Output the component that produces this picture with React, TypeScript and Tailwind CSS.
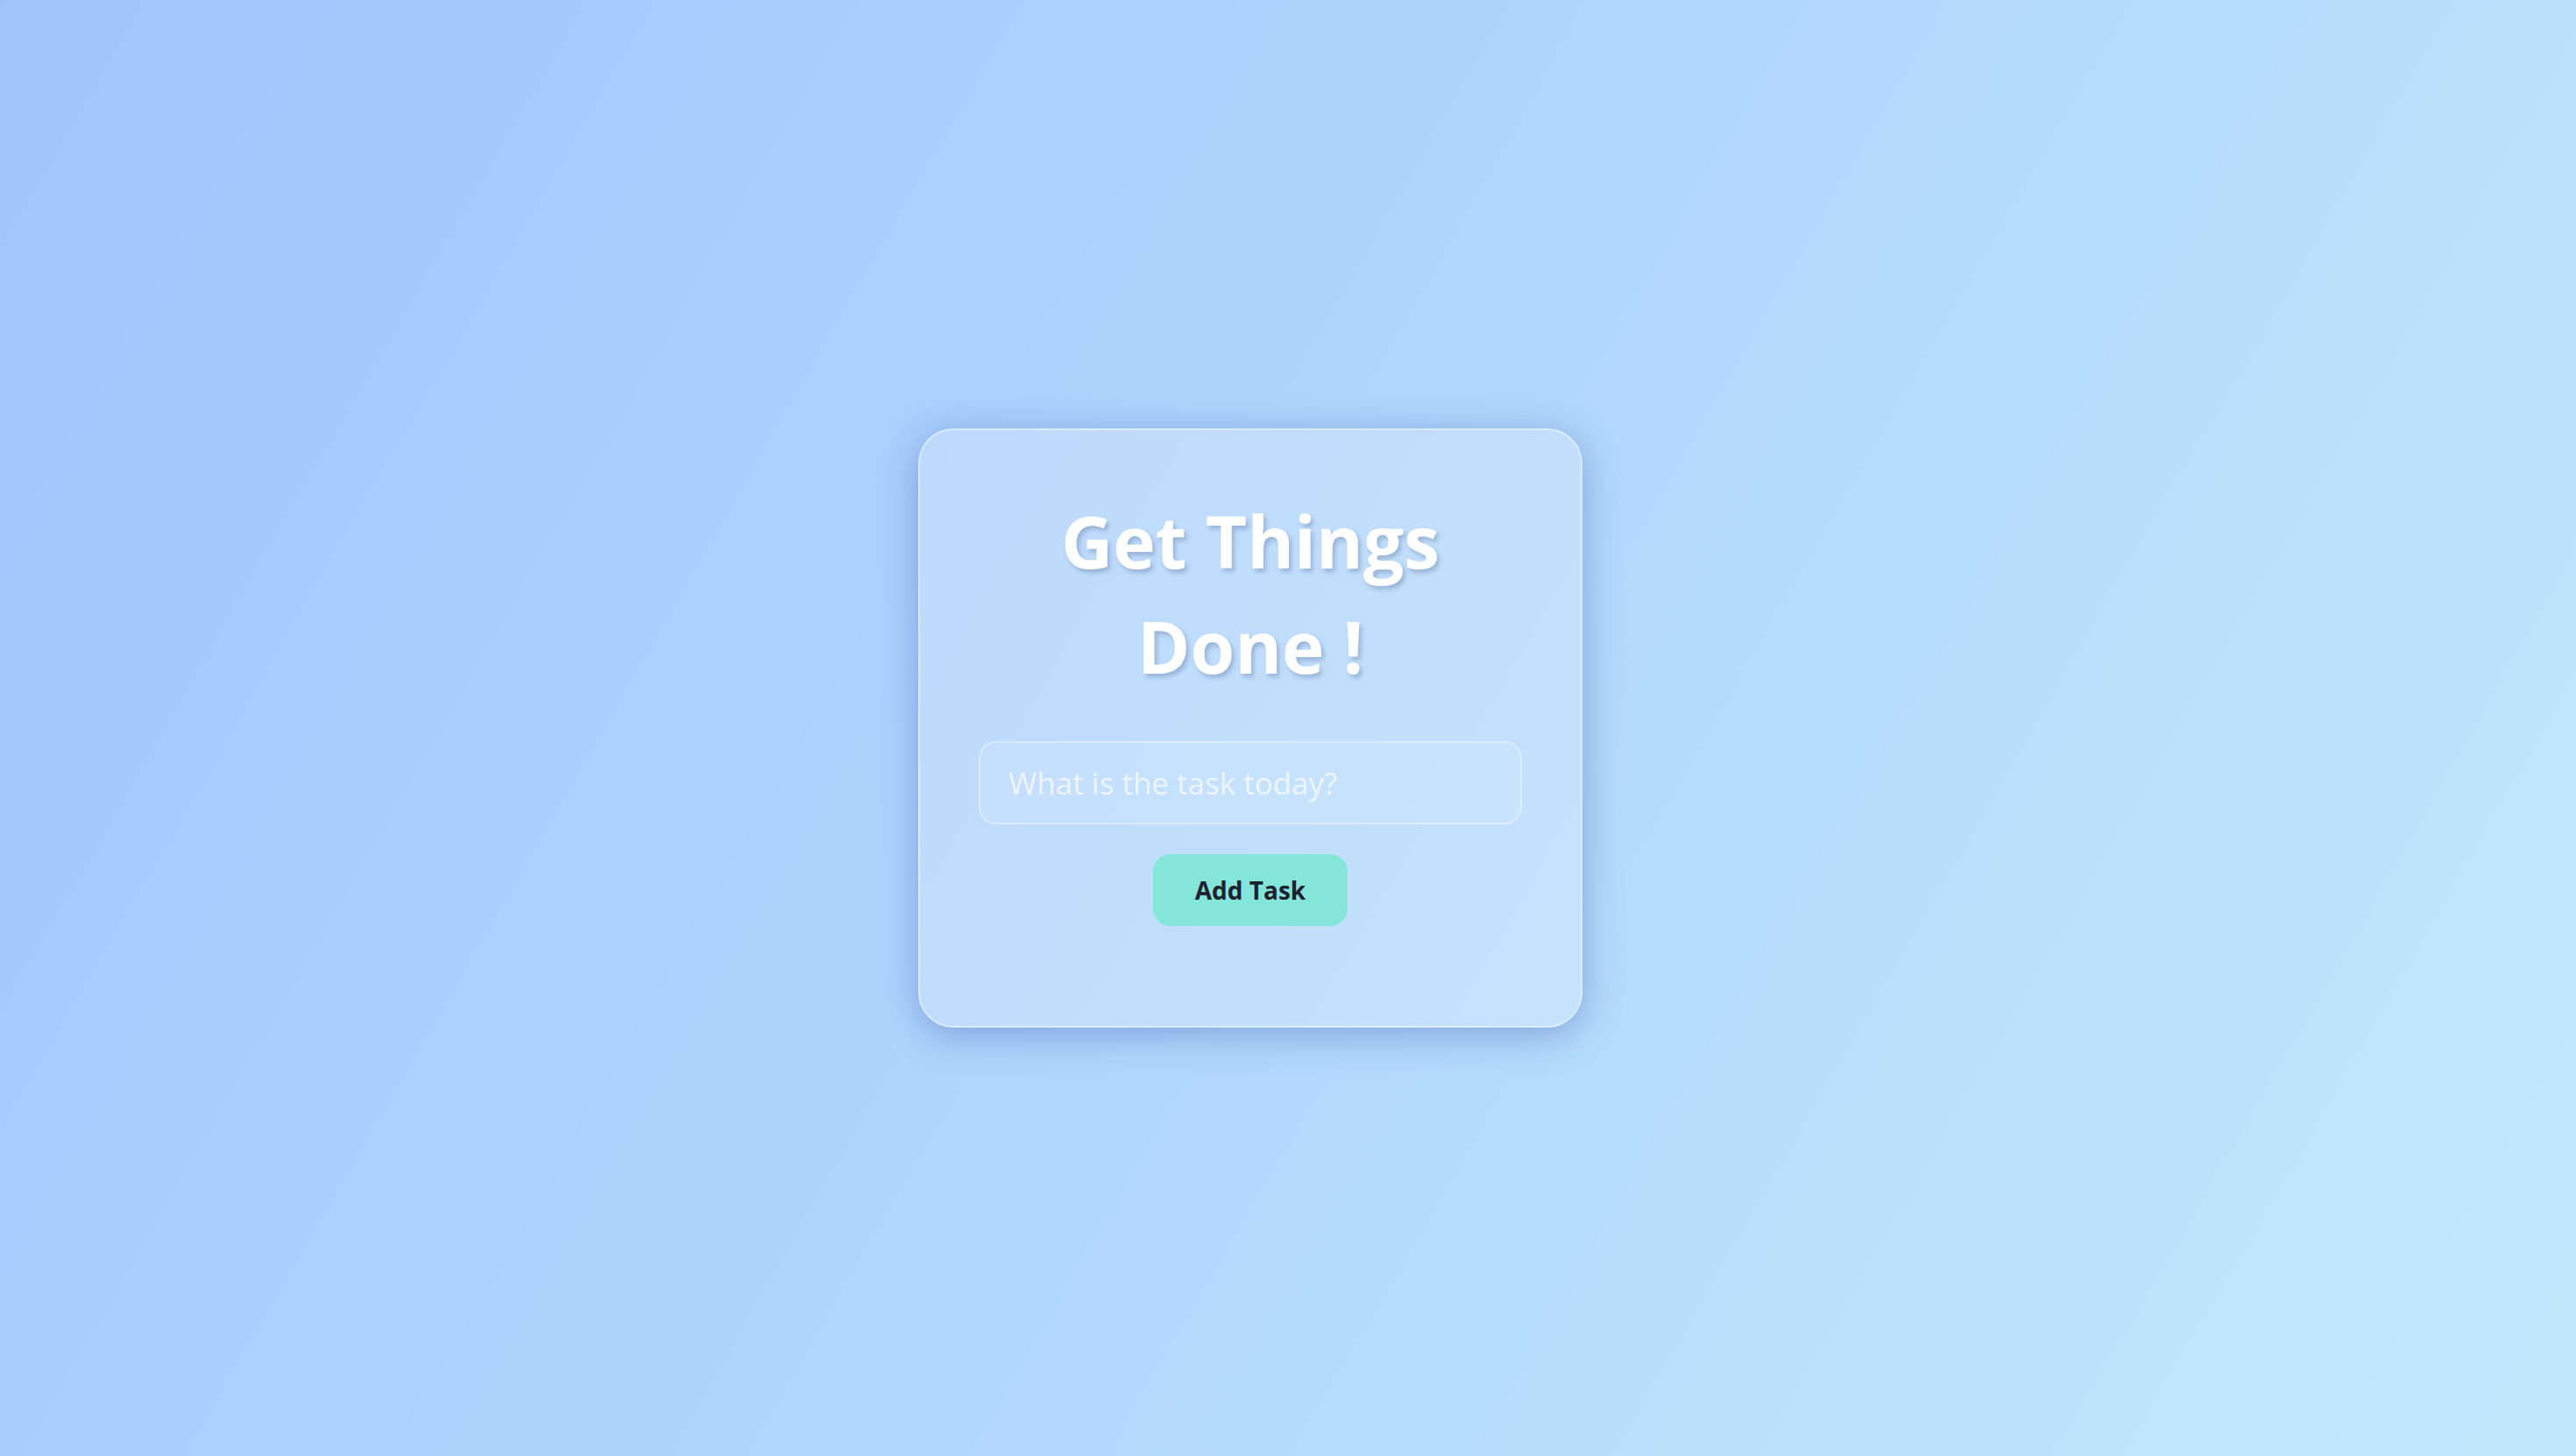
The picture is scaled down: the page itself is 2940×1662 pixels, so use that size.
import React from "react";

export default function App() {
  return (
    <div
      className="min-h-screen w-full flex items-center justify-center pr-[86px] bg-[linear-gradient(120deg,#a1c4fd_0%,#c2e9fb_100%)]"
      style={{ fontFamily: '"Open Sans", "Noto Sans", sans-serif' }}
    >
      <div className="w-[758px] h-[684px] rounded-[40px] bg-white/20 border-2 border-white/40 shadow-[0_8px_44px_rgba(31,60,160,0.34)] flex flex-col items-center px-[67px] pt-[66px] pb-[114px]">
        <h1 className="text-white font-bold text-[82px] leading-[120px] text-center [text-shadow:3px_4px_5px_rgba(40,60,110,0.25)]">
          Get Things
          <br />
          Done !
        </h1>
        <input
          type="text"
          placeholder="What is the task today?"
          className="mt-[49px] w-full h-[97px] rounded-[20px] bg-white/10 border-2 border-white/35 px-[32px] text-[35px] text-white placeholder:text-white/70 outline-none"
        />
        <button className="mt-[34px] w-[222px] h-[84px] rounded-[20px] bg-[#84e6d9] text-[#1c2230] font-bold text-[28px]">
          Add Task
        </button>
      </div>
    </div>
  );
}
